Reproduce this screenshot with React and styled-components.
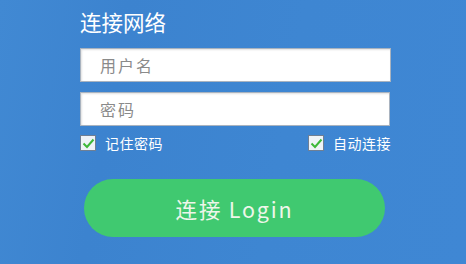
import React from "react";
import styled, { createGlobalStyle } from "styled-components";

const Global = createGlobalStyle`
  html, body { margin: 0; padding: 0; }
  body {
    width: 466px; height: 264px; overflow: hidden;
    font-family: "Noto Sans CJK SC", "Noto Sans", sans-serif;
  }
`;

const Page = styled.div`
  width: 466px;
  height: 264px;
  box-sizing: border-box;
  background: linear-gradient(100deg, #4189d3 0%, #3c83cf 25%, #3e86d2 60%, #3f87d4 100%);
  padding: 7px 0 0 80px;
  display: flex;
  flex-direction: column;
`;

const Title = styled.h1`
  margin: 0;
  font-size: 21.5px;
  font-weight: 400;
  line-height: 30px;
  color: #ffffff;
`;

const Field = styled.input`
  box-sizing: border-box;
  width: ${(p) => p.$w}px;
  height: 34px;
  margin-top: ${(p) => p.$mt}px;
  border: 1px solid #a9b3bf;
  box-shadow: inset 1px 1px 2px rgba(0, 0, 0, 0.12);
  background: #fff;
  padding: 0 0 0 19px;
  font-family: "Noto Sans CJK SC", sans-serif;
  font-size: 16px;
  letter-spacing: 2px;
  outline: none;
  &::placeholder { color: #8a8a8a; }
`;

const OptionsRow = styled.div`
  width: 311px;
  margin-top: 7px;
  display: flex;
  justify-content: space-between;
  align-items: center;
  height: 20px;
`;

const Option = styled.label`
  display: flex;
  align-items: center;
  gap: 9px;
  color: #ffffff;
  font-size: 14px;
  letter-spacing: 0.5px;
  line-height: 20px;
`;

const Box = styled.span`
  box-sizing: border-box;
  width: 16px;
  height: 16px;
  border: 1px solid #6f7f94;
  background: #eef3f8;
  display: flex;
  align-items: center;
  justify-content: center;
`;

const Button = styled.button`
  margin: 26px 0 0 4px;
  width: 301px;
  height: 58px;
  border: none;
  border-radius: 29px;
  background: #40c970;
  color: #eef6ea;
  font-family: "Noto Sans CJK SC", "Noto Sans", sans-serif;
  font-size: 21.5px;
  letter-spacing: 1.8px;
  cursor: pointer;
`;

const Check = () => (
  <Box>
    <svg width="13" height="11" viewBox="0 0 13 11">
      <path d="M1.5 5.5 L5 9 L11.5 1.5" fill="none" stroke="#3db83a" strokeWidth="2" />
    </svg>
  </Box>
);

export default function App() {
  return (
    <>
      <Global />
      <Page>
        <Title>连接网络</Title>
        <Field $w={311} $mt={11} placeholder="用户名" />
        <Field $w={310} $mt={10} type="password" placeholder="密码" />
        <OptionsRow>
          <Option><Check />记住密码</Option>
          <Option><Check />自动连接</Option>
        </OptionsRow>
        <Button>连接 Login</Button>
      </Page>
    </>
  );
}
